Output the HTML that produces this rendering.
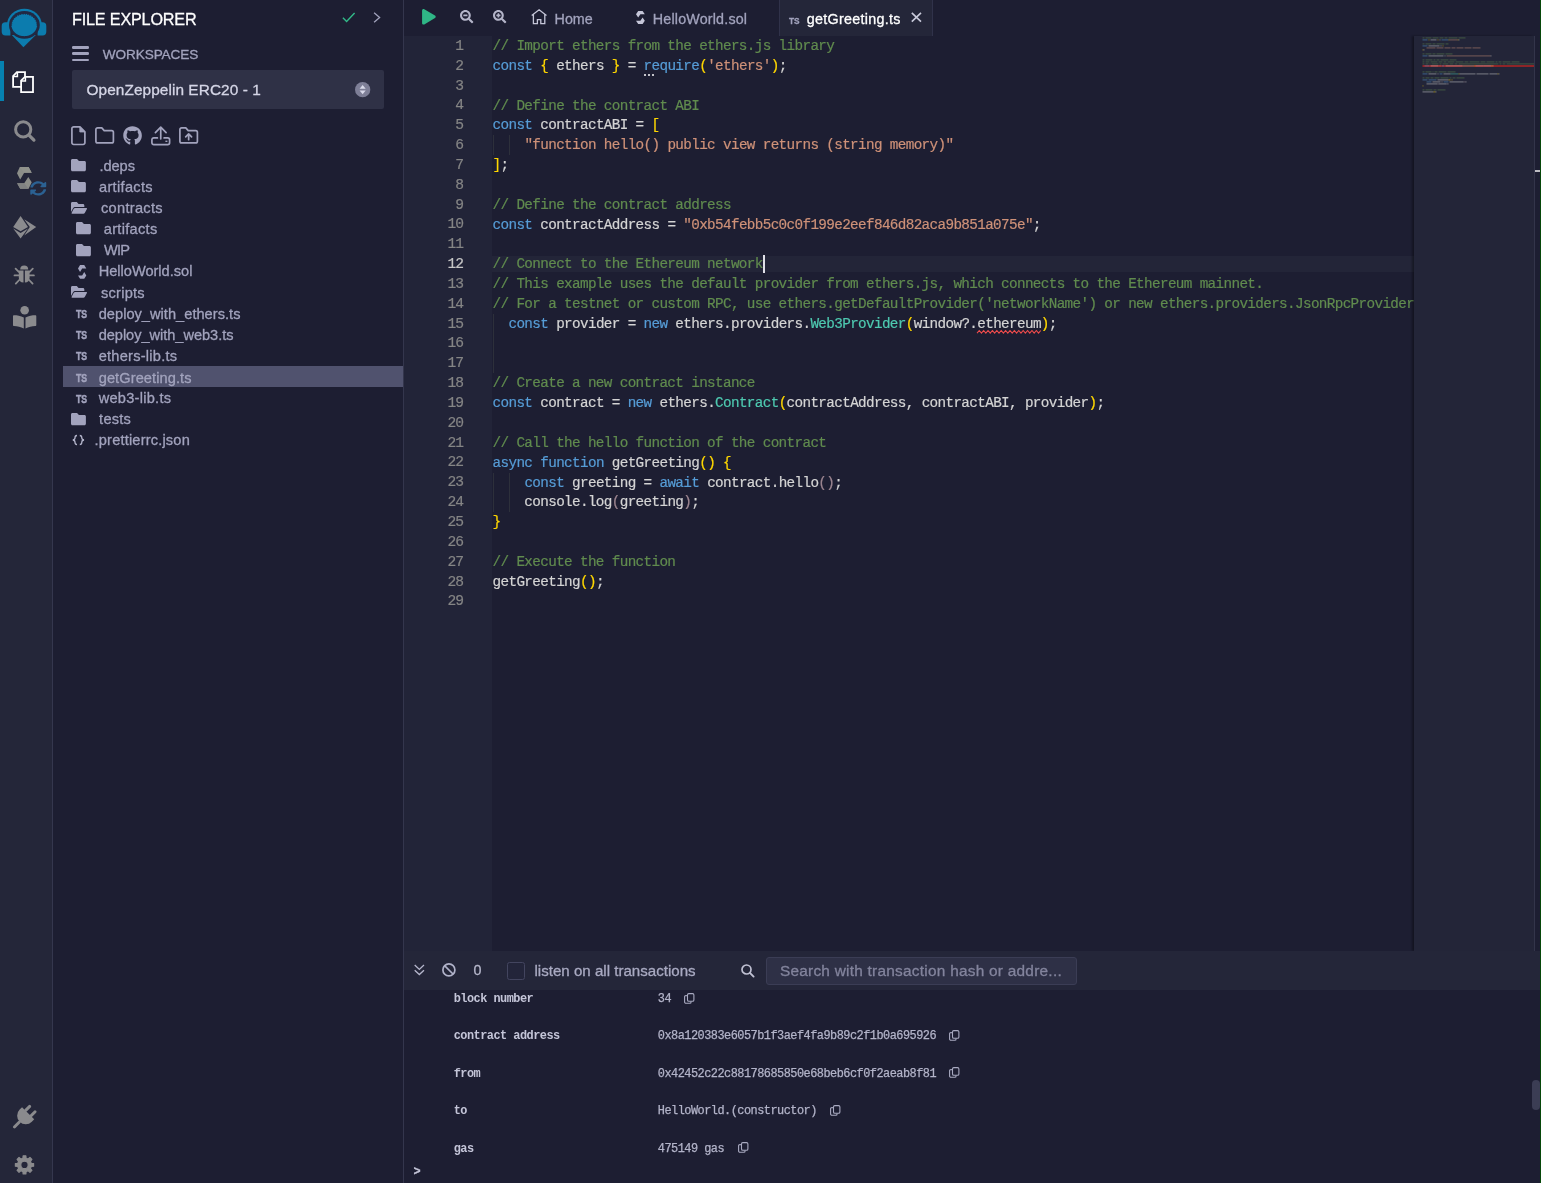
<!DOCTYPE html>
<html lang="en">
<head>
<meta charset="utf-8">
<title>Remix - Ethereum IDE</title>
<style>
*{box-sizing:border-box;margin:0;padding:0}
html,body{width:1541px;height:1183px;overflow:hidden;background:#1d1e32}
body{position:relative;font-family:"Liberation Sans",Arial,sans-serif;color:#a2a3bd;-webkit-font-smoothing:antialiased}
.abs{position:absolute}
svg{display:block;position:absolute;overflow:visible}
.t{position:absolute;white-space:pre;line-height:1;-webkit-text-stroke:.3px}
/* icon bar */
#iconbar{left:0;top:0;width:53px;height:1183px;background:#242639;border-right:1px solid #35374e}
#activebar{left:0;top:61.300px;width:4px;height:39.800px;background:#0681b0}
/* side panel */
#side{left:53px;top:0;width:350px;height:1183px;background:#1d1e32}
#sideborder{left:403px;top:0;width:1px;height:1183px;background:#34364d}
#wsselect{left:72px;top:70px;width:312px;height:38.5px;background:#2f3146;border-radius:2px}
#selrow{left:63px;top:366px;width:339.5px;height:21px;background:#50526e}
.ft{font-size:14.6px;color:#a2a3bd}
.ts{font-size:10.4px;font-weight:700;color:#a2a3bd;transform:scaleX(.84);transform-origin:0 0;-webkit-text-stroke:.45px}
/* main */
#tabbar{left:404px;top:0;width:1137px;height:36px;background:#1d1e32}
#acttab{left:779px;top:0;width:154px;height:36px;background:#242639;border-left:1px solid #30324a;border-right:1px solid #30324a}
#gutter{left:404px;top:36px;width:88px;height:915px;background:#222438}
#editor{left:492px;top:36px;width:921.5px;height:914.5px;background:#1d1e32;overflow:hidden}
#curline{left:0;top:220px;width:921.5px;height:16px;background:#232538}
#minimap{left:1413.5px;top:36px;width:120px;height:914.5px;background:#232538;box-shadow:-2px 0 2px rgba(0,0,0,.35)}
#ruler{left:1533.5px;top:36px;width:7px;height:914.5px;background:#1d1e32;border-left:1px solid #33354a}
#greenedge{left:1540px;top:0;width:1px;height:1183px;background:#07470a}
.ln{position:absolute;right:28.700px;margin-top:.9px;-webkit-text-stroke:.2px;width:60px;text-align:right;font-family:"Liberation Mono",monospace;font-size:14.600px;letter-spacing:-.815px;line-height:19.800px;height:19.800px;color:#858585}
.cl{position:absolute;left:.6px;margin-top:1px;-webkit-text-stroke:.2px;white-space:pre;font-family:"Liberation Mono",monospace;font-size:14.300px;letter-spacing:-.635px;line-height:19.800px;height:19.800px;color:#d4d4d4}
.c{color:#608b4e}.k{color:#569cd6}.s{color:#ce9178}.y{color:#ffd700}.p{color:#9c8590}.g{color:#4ec9b0}
.ig{position:absolute;width:1px;background:#2d303b}
/* terminal */
#termbar{left:404px;top:950.5px;width:1137px;height:39.5px;background:#242639}
#term{left:404px;top:990px;width:1137px;height:193px;background:#1d1e32}
.tl{position:absolute;margin-top:.85px;letter-spacing:-.51px;font-family:"Liberation Mono",monospace;font-size:11.9px;line-height:1;white-space:pre;font-weight:700;color:#c4c5d8}
.tv{position:absolute;margin-top:.85px;letter-spacing:-.51px;font-family:"Liberation Mono",monospace;font-size:11.9px;line-height:1;white-space:pre;color:#b3b4c9;-webkit-text-stroke:.25px}
#cursor{left:271.2px;top:219px;width:2px;height:18px;background:#e0e0e8}
#app{position:absolute;left:0;top:0;width:1541px;height:1183px;will-change:transform}

</style>
</head>
<body>
<div id="app">
<!-- ICON BAR -->
<div id="iconbar" class="abs"></div>
<div id="activebar" class="abs"></div>
<!-- logo -->
<svg id="logo" style="left:0;top:0" width="56" height="56" viewBox="0 0 56 56">
<defs><clipPath id="tophalf"><rect x="0" y="0" width="56" height="24"/></clipPath></defs>
<path d="M23.400 47.200 L11.800 35 H35.800 z" fill="#0c7cae"/>
<ellipse cx="24.400" cy="24.950" rx="17.400" ry="16.150" fill="#0c7cae" clip-path="url(#tophalf)"/>
<path d="M5.400 22.200 H10.400 V35.500 H5.400 A3.700 3.700 0 0 1 1.700 31.800 V25.900 A3.700 3.700 0 0 1 5.400 22.200z M42.600 22.200 H37.600 V35.500 H42.600 A3.700 3.700 0 0 0 46.300 31.800 V25.900 A3.700 3.700 0 0 0 42.600 22.200z" fill="#0c7cae"/>
<ellipse cx="24.400" cy="24.950" rx="15.400" ry="13.850" fill="#212943"/>
<path d="M24.25 13.65 L25.36 14.66 L26.66 13.84 L27.53 15.02 L28.98 14.42 L29.59 15.71 L31.15 15.36 L31.47 16.73 L33.08 16.63 L33.11 18.02 L34.70 18.18 L34.44 19.56 L35.98 19.97 L35.43 21.28 L36.85 21.93 L36.03 23.13 L37.29 24.00 L36.24 25.05 L37.29 26.10 L36.81 27.09 L36.53 28.09 L36.16 29.07 L35.68 30.00 L35.11 30.90 L34.44 31.75 L33.69 32.54 L32.85 33.26 L31.95 33.92 L30.97 34.50 L29.94 35.00 L28.86 35.41 L27.75 35.74 L26.60 35.98 L25.43 36.12 L24.25 36.16 L23.07 36.12 L21.90 35.98 L20.75 35.74 L19.64 35.41 L18.56 35.00 L17.53 34.50 L16.55 33.92 L15.65 33.26 L14.81 32.54 L14.06 31.75 L13.39 30.90 L12.82 30.00 L12.34 29.07 L11.97 28.09 L11.69 27.09 L11.21 26.10 L12.26 25.05 L11.21 24.00 L12.47 23.13 L11.65 21.93 L13.07 21.28 L12.52 19.97 L14.06 19.56 L13.80 18.18 L15.39 18.02 L15.42 16.63 L17.03 16.73 L17.35 15.36 L18.91 15.71 L19.52 14.42 L20.97 15.02 L21.84 13.84 L23.14 14.66z" fill="#0c7cae"/>
</svg>
<!-- files (active) -->
<svg style="left:0;top:60px" width="56" height="40" viewBox="0 60 56 40"><path d="M16.900 72.200 H25 V86.900 H13.100 V76z" fill="none" stroke="#fff" stroke-width="1.800" stroke-linejoin="miter"/><path d="M13.300 76.400 H17.400 V72.300" fill="none" stroke="#fff" stroke-width="1.500"/><path d="M24.900 76.900 H33 V92.200 H21.100 V80.700z" fill="#242639" stroke="#fff" stroke-width="1.800" stroke-linejoin="miter"/><path d="M21.300 81.100 H25.400 V77" fill="none" stroke="#fff" stroke-width="1.500"/></svg>
<!-- search -->
<svg style="left:0;top:110px" width="56" height="40" viewBox="0 110 56 40"><circle cx="23.200" cy="129.400" r="7.600" fill="none" stroke="#8a8a8d" stroke-width="3"/><path d="M28.900 135.100 L33.900 140.100" stroke="#8a8a8d" stroke-width="3.300" stroke-linecap="round"/></svg>
<!-- solidity -->
<svg style="left:0;top:160px" width="56" height="40" viewBox="0 160 56 40"><path d="M19.800 167.100 H28.600 L31.700 172.700 H24.200 L20.200 179.400 L17 173.200z" fill="#8c8e89"/><path d="M19.800 167.100 H28.600 L31.700 172.700 H24.200z" fill="#90928c"/><path d="M17.100 183.300 H24.200 L28.300 176.900 L31.700 182.300 L28.600 188.700 H20.200z" fill="#8c8e89"/><path d="M17.100 183.300 H24.200 L28.600 188.700 H20.200z" fill="#808282"/></svg>
<!-- refresh badge -->
<svg style="left:30px;top:181.300px" width="16.500" height="14.800" viewBox="0 0 512 512" preserveAspectRatio="none"><path fill="#2b6192" d="M370.720 133.280C339.458 104.008 298.888 87.962 255.848 88c-77.458.068-144.328 53.178-162.791 126.850-1.344 5.363-6.122 9.150-11.651 9.150H24.103c-7.498 0-13.194-6.807-11.807-14.176C33.933 94.924 134.813 8 256 8c66.448 0 126.791 26.136 171.315 68.685L463.030 40.970C478.149 25.851 504 36.559 504 57.941V192c0 13.255-10.745 24-24 24H345.941c-21.382 0-32.090-25.851-16.971-40.971l41.750-41.749zM32 296h134.059c21.382 0 32.090 25.851 16.971 40.971l-41.750 41.750c31.262 29.273 71.835 45.319 114.876 45.280 77.418-.07 144.315-53.144 162.787-126.849 1.344-5.363 6.122-9.150 11.651-9.150h57.304c7.498 0 13.194 6.807 11.807 14.176C478.067 417.076 377.187 504 256 504c-66.448 0-126.791-26.136-171.315-68.685L48.970 471.030C33.851 486.149 8 475.441 8 454.059V320c0-13.255 10.745-24 24-24z"/></svg>
<!-- deploy -->
<svg style="left:12.800px;top:215.800px" width="23.300" height="22.400" viewBox="0 0 23.300 22.400"><path d="M7.600 0 L15 11 L7.600 15.200 L.2 11z" fill="#8b8b8e"/><path d="M.2 12.600 L7.600 16.900 L15 12.600 L7.600 22.400z" fill="#8b8b8e"/><path d="M11.200 3.300 L23.200 11 L11.200 19.500 L16.800 11z" fill="#8b8b8e"/></svg>
<!-- bug -->
<svg style="left:14.100px;top:264.700px" width="20.400" height="19.400" viewBox="0 0 20.400 19.400"><path d="M6.200 4.400 A4 4 0 0 1 14.200 4.400z" fill="#8b8b8e"/><path d="M4.800 5.600 H9.500 V17.600 A5 5 0 0 1 4.800 12.800z M10.900 5.600 H15.600 V12.800 A5 5 0 0 1 10.900 17.600z" fill="#8b8b8e"/><path d="M.5 10.400 H4.800 M15.600 10.400 H19.900 M4.800 6.800 L1.600 3.600 M15.600 6.800 L18.800 3.600 M5.200 15 L1.800 18.600 M15.200 15 L18.600 18.600" stroke="#8b8b8e" stroke-width="1.800" stroke-linecap="round"/></svg>
<!-- reader -->
<svg style="left:12.800px;top:305.600px" width="23.300" height="22.600" viewBox="0 0 23.300 22.600"><circle cx="11.650" cy="4.300" r="4.300" fill="#8b8b8e"/><path d="M10.800 11.600 C7.600 9.600 4 9.200 1 9.200 C.4 9.200 0 9.600 0 10.200 V19 C0 19.600 .4 20 1 20 C4.400 20.100 7.800 20.700 10.800 22.600z M12.500 11.600 C15.700 9.600 19.300 9.200 22.300 9.200 C22.900 9.200 23.300 9.600 23.300 10.200 V19 C23.300 19.600 22.900 20 22.300 20 C18.900 20.100 15.500 20.700 12.500 22.600z" fill="#8b8b8e"/></svg>
<!-- plug -->
<svg style="left:0;top:1095px" width="56" height="40" viewBox="0 1095 56 40"><g transform="translate(23.900 1117.500) rotate(45)" fill="#8a8a8d"><rect x="-5.300" y="-13.400" width="3" height="8.500" rx="1.400"/><rect x="2.300" y="-13.400" width="3" height="8.500" rx="1.400"/><path d="M-8.600 -6 H8.600 V-2.600 A8.600 8.600 0 0 1 -8.600 -2.600z"/><rect x="-1.500" y="5" width="3" height="9.800" rx="1.400"/></g></svg>
<!-- gear -->
<svg style="left:0;top:1145px" width="56" height="38" viewBox="0 1145 56 38"><path fill-rule="evenodd" fill="#8a8a8d" stroke="#8a8a8d" stroke-width="1.200" stroke-linejoin="round" d="M31.21 1163.29 L33.60 1163.53 L33.60 1166.27 L31.21 1166.51 L30.38 1168.51 L31.90 1170.37 L29.97 1172.30 L28.11 1170.78 L26.11 1171.61 L25.87 1174.00 L23.13 1174.00 L22.89 1171.61 L20.89 1170.78 L19.03 1172.30 L17.10 1170.37 L18.62 1168.51 L17.79 1166.51 L15.40 1166.27 L15.40 1163.53 L17.79 1163.29 L18.62 1161.29 L17.10 1159.43 L19.03 1157.50 L20.89 1159.02 L22.89 1158.19 L23.13 1155.80 L25.87 1155.80 L26.11 1158.19 L28.11 1159.02 L29.97 1157.50 L31.90 1159.43 L30.38 1161.29z M20.80 1164.90 a3.70 3.70 0 1 0 7.40 0 a3.70 3.70 0 1 0 -7.40 0z"/></svg>

<!-- SIDE PANEL -->
<div id="side" class="abs"></div>
<div id="sideborder" class="abs"></div>
<div class="t" id="t_fe" style="left:71.600px;top:10.500px;font-size:17px;letter-spacing:-.2px;transform:scaleX(.953);transform-origin:0 0;color:#fff">FILE EXPLORER</div>
<!-- check + chevron -->
<svg style="left:342px;top:12.400px" width="14" height="11" viewBox="0 0 14 11"><path d="M.9 5.800 L4.600 9.400 L12.600 1" fill="none" stroke="#32ba89" stroke-width="1.4"/></svg>
<svg style="left:373.400px;top:12.400px" width="8" height="11" viewBox="0 0 8 11"><path d="M1.100 .8 L6.600 5.500 L1.100 10.200" fill="none" stroke="#a2a3bd" stroke-width="1.3"/></svg>
<!-- hamburger -->
<div class="abs" style="left:71.7px;top:46.2px;width:17.3px;height:2.4px;border-radius:1.2px;background:#a2a3bd"></div>
<div class="abs" style="left:71.7px;top:52.4px;width:17.3px;height:2.4px;border-radius:1.2px;background:#a2a3bd"></div>
<div class="abs" style="left:71.7px;top:58.6px;width:17.3px;height:2.4px;border-radius:1.2px;background:#a2a3bd"></div>
<div class="t" id="t_ws" style="left:102.800px;top:47.800px;font-size:13.600px;letter-spacing:-.1px;color:#a2a3bd">WORKSPACES</div>
<div id="wsselect" class="abs"></div>
<div class="t" id="t_oz" style="left:86.5px;top:81.500px;font-size:15.400px;letter-spacing:.07px;color:#d5d6e6">OpenZeppelin ERC20 - 1</div>
<svg style="left:355px;top:81.8px" width="15.3" height="15.3" viewBox="0 0 16 16"><circle cx="8" cy="8" r="8" fill="#7e7f97"/><path d="M8 3.2 L11.2 7 H4.800z M8 12.800 L11.2 9 H4.800z" fill="#d9daea"/></svg>
<!-- toolbar icons -->
<svg style="left:71.300px;top:126.200px" width="14.800" height="19.400" viewBox="0 0 14.800 19.400"><path d="M2.700 .9 H9 L13.900 5.800 V16.700 a1.800 1.800 0 0 1 -1.800 1.800 H2.700 a1.800 1.800 0 0 1 -1.800 -1.800 V2.700 a1.800 1.800 0 0 1 1.800 -1.800z" fill="none" stroke="#a2a3bd" stroke-width="1.700" stroke-linejoin="round"/><path d="M8.800 1 V6 H13.800z" fill="#a2a3bd" stroke="#a2a3bd" stroke-width=".8" stroke-linejoin="round"/></svg>
<svg style="left:95px;top:127.400px" width="19.300" height="16.800" viewBox="0 0 19.300 16.800"><path d="M2.600 .9 H6.800 L9.200 3.600 H16.700 a1.700 1.700 0 0 1 1.700 1.700 V14.200 a1.700 1.700 0 0 1 -1.700 1.700 H2.600 a1.700 1.700 0 0 1 -1.700 -1.700 V2.600 a1.700 1.700 0 0 1 1.700 -1.700z" fill="none" stroke="#a2a3bd" stroke-width="1.700" stroke-linejoin="round"/></svg>
<svg style="left:123px;top:126.200px" width="19.100" height="19.200" viewBox="0 0 496 512"><path fill="#a2a3bd" d="M165.900 397.400c0 2-2.300 3.600-5.200 3.600-3.300.3-5.600-1.300-5.600-3.600 0-2 2.300-3.600 5.200-3.600 3-.3 5.600 1.300 5.600 3.600zm-31.100-4.500c-.7 2 1.300 4.300 4.300 4.900 2.600 1 5.600 0 6.200-2s-1.300-4.300-4.300-5.200c-2.600-.7-5.500.3-6.200 2.300zm44.200-1.700c-2.900.7-4.900 2.600-4.600 4.900.3 2 2.900 3.300 5.900 2.600 2.900-.7 4.900-2.600 4.600-4.600-.3-1.900-3-3.200-5.900-2.900zM244.800 8C106.100 8 0 113.300 0 252c0 110.900 69.800 205.800 169.500 239.200 12.800 2.300 17.300-5.600 17.300-12.100 0-6.200-.3-40.400-.3-61.400 0 0-70 15-84.700-29.800 0 0-11.400-29.100-27.800-36.600 0 0-22.900-15.700 1.600-15.400 0 0 24.900 2 38.600 25.800 21.900 38.600 58.600 27.500 72.900 20.900 2.300-16 8.800-27.100 16-33.700-55.900-6.200-112.300-14.300-112.300-110.500 0-27.500 7.600-41.300 23.600-58.900-2.600-6.500-11.100-33.300 2.600-67.900 20.900-6.500 69 27 69 27 20-5.600 41.500-8.500 62.800-8.500s42.800 2.900 62.800 8.500c0 0 48.100-33.600 69-27 13.700 34.700 5.200 61.400 2.600 67.900 16 17.700 25.800 31.500 25.800 58.900 0 96.500-58.900 104.200-114.800 110.500 9.200 7.900 17 22.900 17 46.400 0 33.700-.3 75.400-.3 83.600 0 6.500 4.600 14.400 17.300 12.100C428.200 457.800 496 362.900 496 252 496 113.300 383.500 8 244.800 8z"/></svg>
<svg style="left:150.500px;top:125.900px" width="19.500" height="19.600" viewBox="0 0 19.500 19.600"><path d="M9.750 12.800 V1.400 M4.400 6.600 L9.750 1.200 L15.100 6.600" fill="none" stroke="#a2a3bd" stroke-width="1.700" stroke-linecap="round" stroke-linejoin="round"/><path d="M6.400 11.900 H2.800 a1.900 1.900 0 0 0 -1.900 1.900 V16.800 a1.900 1.900 0 0 0 1.900 1.900 H16.700 a1.900 1.900 0 0 0 1.900 -1.900 V13.800 a1.900 1.900 0 0 0 -1.900 -1.900 H13.100" fill="none" stroke="#a2a3bd" stroke-width="1.700" stroke-linecap="round"/><rect x="14.400" y="14.600" width="2" height="1.400" fill="#a2a3bd"/></svg>
<svg style="left:178.800px;top:127.400px" width="19.300" height="16.800" viewBox="0 0 19.300 16.800"><path d="M2.600 .9 H6.800 L9.200 3.600 H16.700 a1.700 1.700 0 0 1 1.700 1.700 V14.200 a1.700 1.700 0 0 1 -1.700 1.700 H2.600 a1.700 1.700 0 0 1 -1.700 -1.700 V2.600 a1.700 1.700 0 0 1 1.700 -1.700z" fill="none" stroke="#a2a3bd" stroke-width="1.700" stroke-linejoin="round"/><path d="M9.650 12.700 V7.600 M6.700 9.900 L9.650 6.900 L12.600 9.900" fill="none" stroke="#a2a3bd" stroke-width="1.700" stroke-linecap="round" stroke-linejoin="round"/></svg>
<div id="selrow" class="abs"></div>
<svg style="left:71.4px;top:159.2px" width="14.900" height="12.200" viewBox="0 64 512 384" preserveAspectRatio="none"><path fill="#a2a3bd" d="M464 128H272l-64-64H48C21.490 64 0 85.490 0 112v288c0 26.510 21.490 48 48 48h416c26.510 0 48-21.490 48-48V176c0-26.510-21.490-48-48-48z"/></svg>
<div class="t ft" id="ft0" style="left:99.4px;top:159.0px;letter-spacing:-0.04px">.deps</div>
<svg style="left:71.4px;top:180.3px" width="14.900" height="12.200" viewBox="0 64 512 384" preserveAspectRatio="none"><path fill="#a2a3bd" d="M464 128H272l-64-64H48C21.490 64 0 85.490 0 112v288c0 26.510 21.490 48 48 48h416c26.510 0 48-21.490 48-48V176c0-26.510-21.490-48-48-48z"/></svg>
<div class="t ft" id="ft1" style="left:99.0px;top:180.1px;letter-spacing:0.32px">artifacts</div>
<svg style="left:71.4px;top:201.7px" width="16" height="11.800" viewBox="0 64 576 384" preserveAspectRatio="none"><path fill="#a2a3bd" d="M572.694 292.093L500.270 416.248A63.997 63.997 0 0 1 444.989 448H45.025c-18.523 0-30.064-20.093-20.731-36.093l72.424-124.155A64 64 0 0 1 152 256h399.964c18.523 0 30.064 20.093 20.730 36.093zM152 224h328v-48c0-26.510-21.490-48-48-48H272l-64-64H48C21.490 64 0 85.490 0 112v278.046l69.077-118.418C86.214 242.250 117.989 224 152 224z"/></svg>
<div class="t ft" id="ft2" style="left:101.0px;top:201.2px;letter-spacing:0.30px">contracts</div>
<svg style="left:75.7px;top:222.4px" width="14.900" height="12.200" viewBox="0 64 512 384" preserveAspectRatio="none"><path fill="#a2a3bd" d="M464 128H272l-64-64H48C21.490 64 0 85.490 0 112v288c0 26.510 21.490 48 48 48h416c26.510 0 48-21.490 48-48V176c0-26.510-21.490-48-48-48z"/></svg>
<div class="t ft" id="ft3" style="left:103.8px;top:222.2px;letter-spacing:0.29px">artifacts</div>
<svg style="left:75.7px;top:243.5px" width="14.900" height="12.200" viewBox="0 64 512 384" preserveAspectRatio="none"><path fill="#a2a3bd" d="M464 128H272l-64-64H48C21.490 64 0 85.490 0 112v288c0 26.510 21.490 48 48 48h416c26.510 0 48-21.490 48-48V176c0-26.510-21.490-48-48-48z"/></svg>
<div class="t ft" id="ft4" style="left:104.1px;top:243.3px;letter-spacing:-0.87px">WIP</div>
<svg style="left:77.7px;top:264.8px" width="8.3" height="13.8" viewBox="0 0 8.5 13.8" preserveAspectRatio="none"><path d="M2.1 0 H6.400 L8.500 3.400 H4.250 L2.100 6.900 L0 3.400z" fill="#a2a3bd"/><path d="M6.400 13.800 H2.100 L0 10.400 H4.250 L6.400 6.900 L8.500 10.400z" fill="#a2a3bd"/></svg>
<div class="t ft" id="ft5" style="left:98.7px;top:264.4px;letter-spacing:-0.01px">HelloWorld.sol</div>
<svg style="left:71.4px;top:286.0px" width="16" height="11.800" viewBox="0 64 576 384" preserveAspectRatio="none"><path fill="#a2a3bd" d="M572.694 292.093L500.270 416.248A63.997 63.997 0 0 1 444.989 448H45.025c-18.523 0-30.064-20.093-20.731-36.093l72.424-124.155A64 64 0 0 1 152 256h399.964c18.523 0 30.064 20.093 20.730 36.093zM152 224h328v-48c0-26.510-21.490-48-48-48H272l-64-64H48C21.490 64 0 85.490 0 112v278.046l69.077-118.418C86.214 242.250 117.989 224 152 224z"/></svg>
<div class="t ft" id="ft6" style="left:101.0px;top:285.5px;letter-spacing:0.24px">scripts</div>
<div class="t ts" style="left:75.9px;top:310.3px">TS</div>
<div class="t ft" id="ft7" style="left:98.7px;top:306.6px;letter-spacing:0.03px">deploy_with_ethers.ts</div>
<div class="t ts" style="left:75.9px;top:331.3px">TS</div>
<div class="t ft" id="ft8" style="left:98.7px;top:327.6px;letter-spacing:-0.04px">deploy_with_web3.ts</div>
<div class="t ts" style="left:75.9px;top:352.4px">TS</div>
<div class="t ft" id="ft9" style="left:98.7px;top:348.7px;letter-spacing:0.25px">ethers-lib.ts</div>
<div class="t ts" style="left:75.9px;top:374.3px">TS</div>
<div class="t ft" id="ft10" style="left:98.7px;top:370.6px;letter-spacing:0.09px">getGreeting.ts</div>
<div class="t ts" style="left:75.9px;top:395.0px">TS</div>
<div class="t ft" id="ft11" style="left:98.7px;top:391.3px;letter-spacing:0.26px">web3-lib.ts</div>
<svg style="left:71.4px;top:412.6px" width="14.900" height="12.200" viewBox="0 64 512 384" preserveAspectRatio="none"><path fill="#a2a3bd" d="M464 128H272l-64-64H48C21.490 64 0 85.490 0 112v288c0 26.510 21.490 48 48 48h416c26.510 0 48-21.490 48-48V176c0-26.510-21.490-48-48-48z"/></svg>
<div class="t ft" id="ft12" style="left:99.1px;top:412.4px;letter-spacing:0.24px">tests</div>
<svg style="left:71.6px;top:435.1px" width="12.800" height="10" viewBox="0 0 12.800 10"><path d="M5 .5 C3.200 .5 3 1.500 3 2.800 C3 4 2.600 4.800 .8 5 C2.600 5.200 3 6 3 7.200 C3 8.500 3.200 9.500 5 9.500 M7.800 .5 C9.600 .5 9.800 1.500 9.800 2.800 C9.800 4 10.200 4.800 12 5 C10.200 5.200 9.800 6 9.800 7.200 C9.800 8.500 9.600 9.500 7.800 9.500" fill="none" stroke="#b3b4ca" stroke-width="1.300"/></svg>
<div class="t ft" id="ft13" style="left:94.6px;top:433.4px;letter-spacing:0.18px">.prettierrc.json</div>

<!-- TABS -->
<div id="tabbar" class="abs"></div>
<div id="acttab" class="abs"></div>
<!-- play -->
<svg style="left:422.4px;top:8.8px" width="13.800" height="15.600" viewBox="0 0 448 512"><path fill="#2fb686" d="M424.400 214.700L72.400 6.600C43.800-10.300 0 6.100 0 47.900V464c0 37.500 40.700 60.100 72.400 41.300l352-208c31.400-18.500 31.500-64.100 0-82.600z"/></svg>
<!-- zoom out / in -->
<svg style="left:459.800px;top:9.500px" width="13.300" height="13.300" viewBox="0 0 512 512"><path fill="#b4b5c9" d="M505 442.700L405.300 343c-4.500-4.500-10.600-7-17-7H372c27.600-35.300 44-79.700 44-128C416 93.100 322.900 0 208 0S0 93.100 0 208s93.100 208 208 208c48.300 0 92.700-16.400 128-44v16.300c0 6.400 2.500 12.500 7 17l99.700 99.700c9.400 9.400 24.600 9.400 33.900 0l28.300-28.300c9.400-9.400 9.400-24.600.1-34zM208 336c-70.700 0-128-57.200-128-128 0-70.700 57.200-128 128-128 70.700 0 128 57.200 128 128 0 70.700-57.200 128-128 128z"/><rect x="128" y="176" width="160" height="64" rx="12" fill="#b4b5c9"/></svg>
<svg style="left:492.700px;top:9.500px" width="13.300" height="13.300" viewBox="0 0 512 512"><path fill="#b4b5c9" d="M505 442.700L405.300 343c-4.500-4.500-10.600-7-17-7H372c27.600-35.300 44-79.700 44-128C416 93.100 322.900 0 208 0S0 93.100 0 208s93.100 208 208 208c48.300 0 92.700-16.400 128-44v16.300c0 6.400 2.500 12.500 7 17l99.700 99.700c9.400 9.400 24.600 9.400 33.900 0l28.300-28.300c9.400-9.400 9.400-24.600.1-34zM208 336c-70.700 0-128-57.200-128-128 0-70.700 57.200-128 128-128 70.700 0 128 57.200 128 128 0 70.700-57.200 128-128 128z"/><rect x="128" y="176" width="160" height="64" rx="12" fill="#b4b5c9"/><rect x="176" y="128" width="64" height="160" rx="12" fill="#b4b5c9"/></svg>
<!-- home tab -->
<svg style="left:530.800px;top:8.900px" width="16.200" height="15.400" viewBox="0 0 16.200 15.400"><path d="M.7 6.600 L8.100 .8 L15.500 6.600 M2.400 5.600 V14.600 H6.400 V10.600 H9.800 V14.600 H13.800 V5.600" fill="none" stroke="#c5c6d8" stroke-width="1.300" stroke-linejoin="miter"/></svg>
<div class="t" id="t_home" style="left:554.600px;top:12.300px;font-size:14.300px;color:#a2a3bd">Home</div>
<!-- sol tab -->
<svg style="left:636.200px;top:11.400px" width="8.8" height="12.9" viewBox="0 0 8.5 13.8" preserveAspectRatio="none"><path d="M2.1 0 H6.400 L8.500 3.400 H4.250 L2.100 6.900 L0 3.400z" fill="#c5c6d8"/><path d="M6.400 13.800 H2.100 L0 10.400 H4.250 L6.400 6.900 L8.500 10.400z" fill="#c5c6d8"/></svg>
<div class="t" id="t_hw" style="left:652.800px;top:12.300px;font-size:14.300px;letter-spacing:.18px;color:#a2a3bd">HelloWorld.sol</div>
<!-- active tab -->
<div class="t" id="t_ts" style="left:789.200px;top:15.800px;font-size:9.400px;color:#a2a3bd;font-weight:700;transform:scaleX(.88);transform-origin:0 0">TS</div>
<div class="t" id="t_gg" style="left:806.800px;top:12.300px;font-size:14.300px;letter-spacing:.29px;color:#fff">getGreeting.ts</div>
<svg style="left:911.200px;top:12.200px" width="10.800" height="10.500" viewBox="0 0 10.800 10.500"><path d="M.8 .8 L10 9.700 M10 .8 L.8 9.700" fill="none" stroke="#c9cadb" stroke-width="1.600"/></svg>

<!-- EDITOR -->
<div id="gutter" class="abs">
<div class="ln" style="top:0.0px">1</div>
<div class="ln" style="top:19.8px">2</div>
<div class="ln" style="top:39.7px">3</div>
<div class="ln" style="top:59.5px">4</div>
<div class="ln" style="top:79.4px">5</div>
<div class="ln" style="top:99.2px">6</div>
<div class="ln" style="top:119.0px">7</div>
<div class="ln" style="top:138.9px">8</div>
<div class="ln" style="top:158.7px">9</div>
<div class="ln" style="top:178.6px">10</div>
<div class="ln" style="top:198.4px">11</div>
<div class="ln" style="top:218.2px;color:#c6c6c6">12</div>
<div class="ln" style="top:238.1px">13</div>
<div class="ln" style="top:257.9px">14</div>
<div class="ln" style="top:277.8px">15</div>
<div class="ln" style="top:297.6px">16</div>
<div class="ln" style="top:317.4px">17</div>
<div class="ln" style="top:337.3px">18</div>
<div class="ln" style="top:357.1px">19</div>
<div class="ln" style="top:377.0px">20</div>
<div class="ln" style="top:396.8px">21</div>
<div class="ln" style="top:416.6px">22</div>
<div class="ln" style="top:436.5px">23</div>
<div class="ln" style="top:456.3px">24</div>
<div class="ln" style="top:476.2px">25</div>
<div class="ln" style="top:496.0px">26</div>
<div class="ln" style="top:515.8px">27</div>
<div class="ln" style="top:535.7px">28</div>
<div class="ln" style="top:555.5px">29</div>
</div>
<div id="editor" class="abs"><div id="curline" class="abs"></div>
<div class="ig" style="left:.6px;top:99.2px;height:19.8px"></div><div class="ig" style="left:16.5px;top:99.2px;height:19.8px"></div>
<div class="ig" style="left:.6px;top:277.8px;height:59.5px"></div>
<div class="ig" style="left:.6px;top:436.5px;height:39.7px"></div><div class="ig" style="left:16.5px;top:436.5px;height:39.7px"></div>
<div class="cl" style="top:0.0px"><span class="c">// Import ethers from the ethers.js library</span></div>
<div class="cl" style="top:19.8px"><span class="k">const</span> <span class="y">{</span> ethers <span class="y">}</span> = <span class="k">require</span><span class="y">(</span><span class="s">'ethers'</span><span class="y">)</span>;</div>
<div class="cl" style="top:59.5px"><span class="c">// Define the contract ABI</span></div>
<div class="cl" style="top:79.4px"><span class="k">const</span> contractABI = <span class="y">[</span></div>
<div class="cl" style="top:99.2px">    <span class="s">"function hello() public view returns (string memory)"</span></div>
<div class="cl" style="top:119.0px"><span class="y">]</span>;</div>
<div class="cl" style="top:158.7px"><span class="c">// Define the contract address</span></div>
<div class="cl" style="top:178.6px"><span class="k">const</span> contractAddress = <span class="s">"0xb54febb5c0c0f199e2eef846d82aca9b851a075e"</span>;</div>
<div class="cl" style="top:218.2px"><span class="c">// Connect to the Ethereum network</span></div>
<div class="cl" style="top:238.1px"><span class="c">// This example uses the default provider from ethers.js, which connects to the Ethereum mainnet.</span></div>
<div class="cl" style="top:257.9px"><span class="c">// For a testnet or custom RPC, use ethers.getDefaultProvider('networkName') or new ethers.providers.JsonRpcProvider(url)</span></div>
<div class="cl" style="top:277.8px">  <span class="k">const</span> provider = <span class="k">new</span> ethers.providers.<span class="g">Web3Provider</span><span class="y">(</span>window?.<span class="err">ethereum</span><span class="y">)</span>;</div>
<div class="cl" style="top:337.3px"><span class="c">// Create a new contract instance</span></div>
<div class="cl" style="top:357.1px"><span class="k">const</span> contract = <span class="k">new</span> ethers.<span class="g">Contract</span><span class="y">(</span>contractAddress, contractABI, provider<span class="y">)</span>;</div>
<div class="cl" style="top:396.8px"><span class="c">// Call the hello function of the contract</span></div>
<div class="cl" style="top:416.6px"><span class="k">async</span> <span class="k">function</span> getGreeting<span class="y">()</span> <span class="y">{</span></div>
<div class="cl" style="top:436.5px">    <span class="k">const</span> greeting = <span class="k">await</span> contract.hello<span class="p">()</span>;</div>
<div class="cl" style="top:456.3px">    console.log<span class="p">(</span>greeting<span class="p">)</span>;</div>
<div class="cl" style="top:476.2px"><span class="y">}</span></div>
<div class="cl" style="top:515.8px"><span class="c">// Execute the function</span></div>
<div class="cl" style="top:535.7px">getGreeting<span class="y">()</span>;</div>
<div class="abs" style="left:151.500px;top:37.600px;width:2.200px;height:2px;background:#c4c4ca"></div><div class="abs" style="left:155.500px;top:37.600px;width:2.200px;height:2px;background:#c4c4ca"></div><div class="abs" style="left:159.500px;top:37.600px;width:2.200px;height:2px;background:#c4c4ca"></div>
<svg style="left:485.200px;top:294.200px" width="64" height="3.600" viewBox="0 0 64 3.600"><path d="M0 3.1 L2.20 0.5 L4.40 3.1 L6.60 0.5 L8.80 3.1 L11.00 0.5 L13.20 3.1 L15.40 0.5 L17.60 3.1 L19.80 0.5 L22.00 3.1 L24.20 0.5 L26.40 3.1 L28.60 0.5 L30.80 3.1 L33.00 0.5 L35.20 3.1 L37.40 0.5 L39.60 3.1 L41.80 0.5 L44.00 3.1 L46.20 0.5 L48.40 3.1 L50.60 0.5 L52.80 3.1 L55.00 0.5 L57.20 3.1 L59.40 0.5 L61.60 3.1 L63.80 0.5" fill="none" stroke="#f14c4c" stroke-width="1.100"/></svg>
<div id="cursor" class="abs"></div>
</div>
<div id="minimap" class="abs"><svg width="121" height="70" viewBox="0 0 121 70" style="left:0;top:0"><rect x="8.5" y="1.3" width="2" height="1.2" fill="#608b4e" opacity=".42"/><rect x="11.5" y="1.3" width="6" height="1.2" fill="#608b4e" opacity=".42"/><rect x="18.5" y="1.3" width="6" height="1.2" fill="#608b4e" opacity=".42"/><rect x="25.5" y="1.3" width="4" height="1.2" fill="#608b4e" opacity=".42"/><rect x="30.5" y="1.3" width="3" height="1.2" fill="#608b4e" opacity=".42"/><rect x="34.5" y="1.3" width="9" height="1.2" fill="#608b4e" opacity=".42"/><rect x="44.5" y="1.3" width="7" height="1.2" fill="#608b4e" opacity=".42"/><rect x="8.5" y="3.3" width="5" height="1.2" fill="#569cd6" opacity=".42"/><rect x="14.5" y="3.3" width="1" height="1.2" fill="#ffd700" opacity=".42"/><rect x="16.5" y="3.3" width="6" height="1.2" fill="#d4d4d4" opacity=".42"/><rect x="23.5" y="3.3" width="1" height="1.2" fill="#ffd700" opacity=".42"/><rect x="25.5" y="3.3" width="1" height="1.2" fill="#d4d4d4" opacity=".42"/><rect x="27.5" y="3.3" width="7" height="1.2" fill="#569cd6" opacity=".42"/><rect x="34.5" y="3.3" width="1" height="1.2" fill="#ffd700" opacity=".42"/><rect x="35.5" y="3.3" width="8" height="1.2" fill="#ce9178" opacity=".42"/><rect x="43.5" y="3.3" width="1" height="1.2" fill="#ffd700" opacity=".42"/><rect x="44.5" y="3.3" width="1" height="1.2" fill="#d4d4d4" opacity=".42"/><rect x="8.5" y="7.3" width="2" height="1.2" fill="#608b4e" opacity=".42"/><rect x="11.5" y="7.3" width="6" height="1.2" fill="#608b4e" opacity=".42"/><rect x="18.5" y="7.3" width="3" height="1.2" fill="#608b4e" opacity=".42"/><rect x="22.5" y="7.3" width="8" height="1.2" fill="#608b4e" opacity=".42"/><rect x="31.5" y="7.3" width="3" height="1.2" fill="#608b4e" opacity=".42"/><rect x="8.5" y="9.3" width="5" height="1.2" fill="#569cd6" opacity=".42"/><rect x="14.5" y="9.3" width="11" height="1.2" fill="#d4d4d4" opacity=".42"/><rect x="26.5" y="9.3" width="1" height="1.2" fill="#d4d4d4" opacity=".42"/><rect x="28.5" y="9.3" width="1" height="1.2" fill="#ffd700" opacity=".42"/><rect x="12.5" y="11.3" width="9" height="1.2" fill="#ce9178" opacity=".42"/><rect x="22.5" y="11.3" width="7" height="1.2" fill="#ce9178" opacity=".42"/><rect x="30.5" y="11.3" width="6" height="1.2" fill="#ce9178" opacity=".42"/><rect x="37.5" y="11.3" width="4" height="1.2" fill="#ce9178" opacity=".42"/><rect x="42.5" y="11.3" width="7" height="1.2" fill="#ce9178" opacity=".42"/><rect x="50.5" y="11.3" width="7" height="1.2" fill="#ce9178" opacity=".42"/><rect x="58.5" y="11.3" width="8" height="1.2" fill="#ce9178" opacity=".42"/><rect x="8.5" y="13.3" width="1" height="1.2" fill="#ffd700" opacity=".42"/><rect x="9.5" y="13.3" width="1" height="1.2" fill="#d4d4d4" opacity=".42"/><rect x="8.5" y="17.3" width="2" height="1.2" fill="#608b4e" opacity=".42"/><rect x="11.5" y="17.3" width="6" height="1.2" fill="#608b4e" opacity=".42"/><rect x="18.5" y="17.3" width="3" height="1.2" fill="#608b4e" opacity=".42"/><rect x="22.5" y="17.3" width="8" height="1.2" fill="#608b4e" opacity=".42"/><rect x="31.5" y="17.3" width="7" height="1.2" fill="#608b4e" opacity=".42"/><rect x="8.5" y="19.3" width="5" height="1.2" fill="#569cd6" opacity=".42"/><rect x="14.5" y="19.3" width="15" height="1.2" fill="#d4d4d4" opacity=".42"/><rect x="30.5" y="19.3" width="1" height="1.2" fill="#d4d4d4" opacity=".42"/><rect x="32.5" y="19.3" width="44" height="1.2" fill="#ce9178" opacity=".42"/><rect x="76.5" y="19.3" width="1" height="1.2" fill="#d4d4d4" opacity=".42"/><rect x="8.5" y="23.3" width="2" height="1.2" fill="#608b4e" opacity=".42"/><rect x="11.5" y="23.3" width="7" height="1.2" fill="#608b4e" opacity=".42"/><rect x="19.5" y="23.3" width="2" height="1.2" fill="#608b4e" opacity=".42"/><rect x="22.5" y="23.3" width="3" height="1.2" fill="#608b4e" opacity=".42"/><rect x="26.5" y="23.3" width="8" height="1.2" fill="#608b4e" opacity=".42"/><rect x="35.5" y="23.3" width="7" height="1.2" fill="#608b4e" opacity=".42"/><rect x="8.5" y="25.3" width="2" height="1.2" fill="#608b4e" opacity=".42"/><rect x="11.5" y="25.3" width="4" height="1.2" fill="#608b4e" opacity=".42"/><rect x="16.5" y="25.3" width="7" height="1.2" fill="#608b4e" opacity=".42"/><rect x="24.5" y="25.3" width="4" height="1.2" fill="#608b4e" opacity=".42"/><rect x="29.5" y="25.3" width="3" height="1.2" fill="#608b4e" opacity=".42"/><rect x="33.5" y="25.3" width="7" height="1.2" fill="#608b4e" opacity=".42"/><rect x="41.5" y="25.3" width="8" height="1.2" fill="#608b4e" opacity=".42"/><rect x="50.5" y="25.3" width="4" height="1.2" fill="#608b4e" opacity=".42"/><rect x="55.5" y="25.3" width="10" height="1.2" fill="#608b4e" opacity=".42"/><rect x="66.5" y="25.3" width="5" height="1.2" fill="#608b4e" opacity=".42"/><rect x="72.5" y="25.3" width="8" height="1.2" fill="#608b4e" opacity=".42"/><rect x="81.5" y="25.3" width="2" height="1.2" fill="#608b4e" opacity=".42"/><rect x="84.5" y="25.3" width="3" height="1.2" fill="#608b4e" opacity=".42"/><rect x="88.5" y="25.3" width="8" height="1.2" fill="#608b4e" opacity=".42"/><rect x="97.5" y="25.3" width="8" height="1.2" fill="#608b4e" opacity=".42"/><rect x="8.5" y="27.3" width="2" height="1.2" fill="#608b4e" opacity=".42"/><rect x="11.5" y="27.3" width="3" height="1.2" fill="#608b4e" opacity=".42"/><rect x="15.5" y="27.3" width="1" height="1.2" fill="#608b4e" opacity=".42"/><rect x="17.5" y="27.3" width="7" height="1.2" fill="#608b4e" opacity=".42"/><rect x="25.5" y="27.3" width="2" height="1.2" fill="#608b4e" opacity=".42"/><rect x="28.5" y="27.3" width="6" height="1.2" fill="#608b4e" opacity=".42"/><rect x="35.5" y="27.3" width="4" height="1.2" fill="#608b4e" opacity=".42"/><rect x="40.5" y="27.3" width="3" height="1.2" fill="#608b4e" opacity=".42"/><rect x="44.5" y="27.3" width="40" height="1.2" fill="#608b4e" opacity=".42"/><rect x="85.5" y="27.3" width="2" height="1.2" fill="#608b4e" opacity=".42"/><rect x="88.5" y="27.3" width="3" height="1.2" fill="#608b4e" opacity=".42"/><rect x="92.5" y="27.3" width="28" height="1.2" fill="#608b4e" opacity=".42"/><rect x="8.5" y="29" width="112" height="2" fill="#8e2428"/><rect x="10.5" y="29.3" width="5" height="1.2" fill="#569cd6" opacity=".42"/><rect x="16.5" y="29.3" width="8" height="1.2" fill="#d4d4d4" opacity=".42"/><rect x="25.5" y="29.3" width="1" height="1.2" fill="#d4d4d4" opacity=".42"/><rect x="27.5" y="29.3" width="3" height="1.2" fill="#569cd6" opacity=".42"/><rect x="31.5" y="29.3" width="17" height="1.2" fill="#d4d4d4" opacity=".42"/><rect x="48.5" y="29.3" width="12" height="1.2" fill="#4ec9b0" opacity=".42"/><rect x="60.5" y="29.3" width="1" height="1.2" fill="#ffd700" opacity=".42"/><rect x="61.5" y="29.3" width="8" height="1.2" fill="#d4d4d4" opacity=".42"/><rect x="69.5" y="29.3" width="8" height="1.2" fill="#d4d4d4" opacity=".42"/><rect x="77.5" y="29.3" width="1" height="1.2" fill="#ffd700" opacity=".42"/><rect x="78.5" y="29.3" width="1" height="1.2" fill="#d4d4d4" opacity=".42"/><rect x="8.5" y="35.3" width="2" height="1.2" fill="#608b4e" opacity=".42"/><rect x="11.5" y="35.3" width="6" height="1.2" fill="#608b4e" opacity=".42"/><rect x="18.5" y="35.3" width="1" height="1.2" fill="#608b4e" opacity=".42"/><rect x="20.5" y="35.3" width="3" height="1.2" fill="#608b4e" opacity=".42"/><rect x="24.5" y="35.3" width="8" height="1.2" fill="#608b4e" opacity=".42"/><rect x="33.5" y="35.3" width="8" height="1.2" fill="#608b4e" opacity=".42"/><rect x="8.5" y="37.3" width="5" height="1.2" fill="#569cd6" opacity=".42"/><rect x="14.5" y="37.3" width="8" height="1.2" fill="#d4d4d4" opacity=".42"/><rect x="23.5" y="37.3" width="1" height="1.2" fill="#d4d4d4" opacity=".42"/><rect x="25.5" y="37.3" width="3" height="1.2" fill="#569cd6" opacity=".42"/><rect x="29.5" y="37.3" width="7" height="1.2" fill="#d4d4d4" opacity=".42"/><rect x="36.5" y="37.3" width="8" height="1.2" fill="#4ec9b0" opacity=".42"/><rect x="44.5" y="37.3" width="1" height="1.2" fill="#ffd700" opacity=".42"/><rect x="45.5" y="37.3" width="16" height="1.2" fill="#d4d4d4" opacity=".42"/><rect x="62.5" y="37.3" width="12" height="1.2" fill="#d4d4d4" opacity=".42"/><rect x="75.5" y="37.3" width="8" height="1.2" fill="#d4d4d4" opacity=".42"/><rect x="83.5" y="37.3" width="1" height="1.2" fill="#ffd700" opacity=".42"/><rect x="84.5" y="37.3" width="1" height="1.2" fill="#d4d4d4" opacity=".42"/><rect x="8.5" y="41.3" width="2" height="1.2" fill="#608b4e" opacity=".42"/><rect x="11.5" y="41.3" width="4" height="1.2" fill="#608b4e" opacity=".42"/><rect x="16.5" y="41.3" width="3" height="1.2" fill="#608b4e" opacity=".42"/><rect x="20.5" y="41.3" width="5" height="1.2" fill="#608b4e" opacity=".42"/><rect x="26.5" y="41.3" width="8" height="1.2" fill="#608b4e" opacity=".42"/><rect x="35.5" y="41.3" width="2" height="1.2" fill="#608b4e" opacity=".42"/><rect x="38.5" y="41.3" width="3" height="1.2" fill="#608b4e" opacity=".42"/><rect x="42.5" y="41.3" width="8" height="1.2" fill="#608b4e" opacity=".42"/><rect x="8.5" y="43.3" width="5" height="1.2" fill="#569cd6" opacity=".42"/><rect x="14.5" y="43.3" width="8" height="1.2" fill="#569cd6" opacity=".42"/><rect x="23.5" y="43.3" width="11" height="1.2" fill="#d4d4d4" opacity=".42"/><rect x="34.5" y="43.3" width="2" height="1.2" fill="#ffd700" opacity=".42"/><rect x="37.5" y="43.3" width="1" height="1.2" fill="#ffd700" opacity=".42"/><rect x="12.5" y="45.3" width="5" height="1.2" fill="#569cd6" opacity=".42"/><rect x="18.5" y="45.3" width="8" height="1.2" fill="#d4d4d4" opacity=".42"/><rect x="27.5" y="45.3" width="1" height="1.2" fill="#d4d4d4" opacity=".42"/><rect x="29.5" y="45.3" width="5" height="1.2" fill="#569cd6" opacity=".42"/><rect x="35.5" y="45.3" width="14" height="1.2" fill="#d4d4d4" opacity=".42"/><rect x="49.5" y="45.3" width="2" height="1.2" fill="#9c8590" opacity=".42"/><rect x="51.5" y="45.3" width="1" height="1.2" fill="#d4d4d4" opacity=".42"/><rect x="12.5" y="47.3" width="11" height="1.2" fill="#d4d4d4" opacity=".42"/><rect x="23.5" y="47.3" width="1" height="1.2" fill="#9c8590" opacity=".42"/><rect x="24.5" y="47.3" width="8" height="1.2" fill="#d4d4d4" opacity=".42"/><rect x="32.5" y="47.3" width="1" height="1.2" fill="#9c8590" opacity=".42"/><rect x="33.5" y="47.3" width="1" height="1.2" fill="#d4d4d4" opacity=".42"/><rect x="8.5" y="49.3" width="1" height="1.2" fill="#ffd700" opacity=".42"/><rect x="8.5" y="53.3" width="2" height="1.2" fill="#608b4e" opacity=".42"/><rect x="11.5" y="53.3" width="7" height="1.2" fill="#608b4e" opacity=".42"/><rect x="19.5" y="53.3" width="3" height="1.2" fill="#608b4e" opacity=".42"/><rect x="23.5" y="53.3" width="8" height="1.2" fill="#608b4e" opacity=".42"/><rect x="8.5" y="55.3" width="11" height="1.2" fill="#d4d4d4" opacity=".42"/><rect x="19.5" y="55.3" width="2" height="1.2" fill="#ffd700" opacity=".42"/><rect x="21.5" y="55.3" width="1" height="1.2" fill="#d4d4d4" opacity=".42"/></svg></div>
<div id="ruler" class="abs"><div class="abs" style="left:0;top:134px;width:6px;height:2.200px;background:#bdbdc2"></div></div>
<!-- TERMINAL -->
<div id="termbar" class="abs"></div>
<svg style="left:413.600px;top:964.300px" width="10.700" height="11.800" viewBox="0 0 10.700 11.800"><path d="M.7 1 L5.350 5.400 L10 1 M.7 6.200 L5.350 10.600 L10 6.200" fill="none" stroke="#b6b7cd" stroke-width="1.300"/></svg>
<svg style="left:442px;top:963px" width="13.800" height="13.800" viewBox="0 0 13.800 13.800"><circle cx="6.900" cy="6.900" r="6" fill="none" stroke="#b0b2c9" stroke-width="1.700"/><path d="M2.800 2.800 L11 11" stroke="#b0b2c9" stroke-width="1.700"/></svg>
<div class="t" id="t_zero" style="left:473.500px;top:963.300px;font-size:14.300px;color:#b6b7cb">0</div>
<div class="abs" style="left:507.200px;top:962px;width:18.200px;height:17.800px;border:1px solid #43455f;border-radius:2.500px;background:#23253a"></div>
<div class="t" id="t_listen" style="left:534.500px;top:962.700px;font-size:15.100px;color:#a9aac2">listen on all transactions</div>
<svg style="left:741px;top:963.900px" width="13.500" height="13.500" viewBox="0 0 13.500 13.500"><circle cx="5.500" cy="5.500" r="4.500" fill="none" stroke="#c0c1d3" stroke-width="1.700"/><path d="M8.900 8.900 L12.600 12.600" stroke="#c0c1d3" stroke-width="1.900" stroke-linecap="round"/></svg>
<div class="abs" style="left:765.600px;top:957.300px;width:311.200px;height:27.600px;border:1px solid #3b3d55;border-radius:3px;background:#2e3046"></div>
<div class="t" id="t_search" style="left:779.900px;top:962.900px;font-size:15.400px;letter-spacing:.25px;color:#83849d">Search with transaction hash or addre...</div>

<div id="term" class="abs"></div>
<div class="tl" style="left:453.700px;top:993.5px">block number</div>
<div class="tv" style="left:657.800px;top:993.5px">34</div>
<svg style="left:684.4px;top:992.7px" width="10.600" height="10.800" viewBox="0 0 10.600 10.800"><rect x="3.500" y=".6" width="6.400" height="7.600" rx="1.300" fill="none" stroke="#a9aac1" stroke-width="1.100"/><path d="M2.900 2.600 H1.900 a1.300 1.300 0 0 0 -1.300 1.300 V8.900 a1.300 1.300 0 0 0 1.300 1.300 H5.800 a1.300 1.300 0 0 0 1.300 -1.300 V8.600" fill="none" stroke="#a9aac1" stroke-width="1.100"/></svg>
<div class="tl" style="left:453.700px;top:1030.5px">contract address</div>
<div class="tv" style="left:657.800px;top:1030.5px">0x8a120383e6057b1f3aef4fa9b89c2f1b0a695926</div>
<svg style="left:949.0px;top:1029.7px" width="10.600" height="10.800" viewBox="0 0 10.600 10.800"><rect x="3.500" y=".6" width="6.400" height="7.600" rx="1.300" fill="none" stroke="#a9aac1" stroke-width="1.100"/><path d="M2.900 2.600 H1.900 a1.300 1.300 0 0 0 -1.300 1.300 V8.900 a1.300 1.300 0 0 0 1.300 1.300 H5.800 a1.300 1.300 0 0 0 1.300 -1.300 V8.600" fill="none" stroke="#a9aac1" stroke-width="1.100"/></svg>
<div class="tl" style="left:453.700px;top:1068.1px">from</div>
<div class="tv" style="left:657.800px;top:1068.1px">0x42452c22c88178685850e68beb6cf0f2aeab8f81</div>
<svg style="left:949.0px;top:1067.3px" width="10.600" height="10.800" viewBox="0 0 10.600 10.800"><rect x="3.500" y=".6" width="6.400" height="7.600" rx="1.300" fill="none" stroke="#a9aac1" stroke-width="1.100"/><path d="M2.900 2.600 H1.900 a1.300 1.300 0 0 0 -1.300 1.300 V8.900 a1.300 1.300 0 0 0 1.300 1.300 H5.800 a1.300 1.300 0 0 0 1.300 -1.300 V8.600" fill="none" stroke="#a9aac1" stroke-width="1.100"/></svg>
<div class="tl" style="left:453.700px;top:1105.3px">to</div>
<div class="tv" style="left:657.800px;top:1105.3px">HelloWorld.(constructor)</div>
<svg style="left:830.0px;top:1104.5px" width="10.600" height="10.800" viewBox="0 0 10.600 10.800"><rect x="3.500" y=".6" width="6.400" height="7.600" rx="1.300" fill="none" stroke="#a9aac1" stroke-width="1.100"/><path d="M2.900 2.600 H1.900 a1.300 1.300 0 0 0 -1.300 1.300 V8.900 a1.300 1.300 0 0 0 1.300 1.300 H5.800 a1.300 1.300 0 0 0 1.300 -1.300 V8.600" fill="none" stroke="#a9aac1" stroke-width="1.100"/></svg>
<div class="tl" style="left:453.700px;top:1142.8px">gas</div>
<div class="tv" style="left:657.800px;top:1142.8px">475149 gas</div>
<svg style="left:737.5px;top:1142.0px" width="10.600" height="10.800" viewBox="0 0 10.600 10.800"><rect x="3.500" y=".6" width="6.400" height="7.600" rx="1.300" fill="none" stroke="#a9aac1" stroke-width="1.100"/><path d="M2.900 2.600 H1.900 a1.300 1.300 0 0 0 -1.300 1.300 V8.900 a1.300 1.300 0 0 0 1.300 1.300 H5.800 a1.300 1.300 0 0 0 1.300 -1.300 V8.600" fill="none" stroke="#a9aac1" stroke-width="1.100"/></svg>
<div class="tv" style="left:413.600px;top:1165.800px;font-weight:700;color:#c4c5d8">&gt;</div>
<div class="abs" style="left:1532px;top:1080px;width:7.500px;height:30px;border-radius:4px;background:#3b3d54"></div>
<div id="greenedge" class="abs"></div>
</div>
</body>
</html>
